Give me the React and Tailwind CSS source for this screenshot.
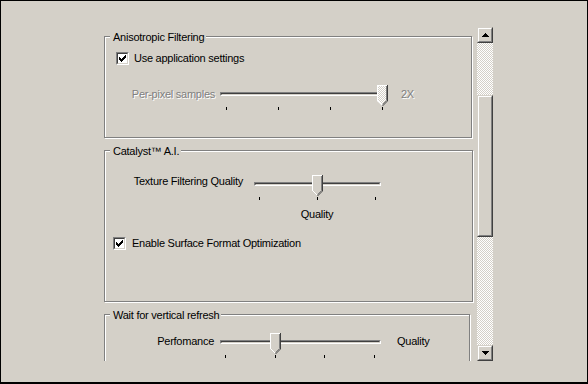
import React from 'react';

const raisedOuter = 'border border-t-[#d4d0c8] border-l-[#d4d0c8] border-r-[#404040] border-b-[#404040]';
const raisedInner = 'h-full border border-t-white border-l-white border-r-[#808080] border-b-[#808080] bg-[#d4d0c8]';
const sunkenOuter = 'border border-t-[#808080] border-l-[#808080] border-r-white border-b-white';
const sunkenInner = 'h-full border border-t-[#404040] border-l-[#404040] border-r-[#d4d0c8] border-b-[#d4d0c8]';
const checker = 'bg-[image:repeating-conic-gradient(#ffffff_0%_25%,#d4d0c8_0%_50%)] bg-[length:2px_2px]';
const disabledText = 'text-[#808080] [text-shadow:1px_1px_0_#ffffff]';

function CheckBox() {
  return (
    <div className={`w-[13px] h-[13px] shrink-0 ${sunkenOuter}`}>
      <div className="w-full h-full border border-t-[#404040] border-l-[#404040] border-r-[#d4d0c8] border-b-[#d4d0c8] bg-white p-[1px]">
        <svg width="7" height="7" viewBox="0 0 7 7" className="block" shapeRendering="crispEdges">
          <path
            fill="#000"
            d="M0 2h1v3H0zM1 3h1v3H1zM2 4h1v3H2zM3 3h1v3H3zM4 2h1v3H4zM5 1h1v3H5zM6 0h1v3H6z"
          />
        </svg>
      </div>
    </div>
  );
}

function Thumb({ disabled, className }) {
  return (
    <svg width="11" height="21" viewBox="0 0 11 21" className={`absolute top-0 ${className}`}>
      {disabled && (
        <defs>
          <pattern id="dither" width="2" height="2" patternUnits="userSpaceOnUse">
            <rect width="2" height="2" fill="#d4d0c8" />
            <rect width="1" height="1" fill="#ffffff" />
            <rect x="1" y="1" width="1" height="1" fill="#ffffff" />
          </pattern>
        </defs>
      )}
      <polygon points="0,0 11,0 11,16 5.5,21 0,16" fill={disabled ? 'url(#dither)' : '#d4d0c8'} />
      <path d="M0.5 16 V0.5 H10" stroke="#ffffff" fill="none" shapeRendering="crispEdges" />
      <path d="M0.5 15.5 L5.5 20.5" stroke="#ffffff" fill="none" />
      <path d="M9.5 1 V15.5 L5.5 19.5" stroke="#808080" fill="none" />
      <path d="M10.5 0 V16 L5.5 21" stroke="#404040" fill="none" />
    </svg>
  );
}

function Slider({ className, thumb, ticks, tickPad, disabled }) {
  return (
    <div className={`relative h-[25px] shrink-0 ${className}`}>
      <div className={`mt-[7px] h-[4px] ${sunkenOuter}`}>
        <div className={sunkenInner} />
      </div>
      <div className={`mt-[11px] flex justify-between ${tickPad}`}>
        {Array.from({ length: ticks }).map((_, i) => (
          <div key={i} className="w-[1px] h-[3px] bg-black" />
        ))}
      </div>
      <Thumb disabled={disabled} className={thumb} />
    </div>
  );
}

function GroupBox({ title, className, children }) {
  return (
    <div
      className={`relative shrink-0 border border-[#808080] shadow-[1px_1px_0_#ffffff,inset_1px_1px_0_#ffffff] ${className}`}
    >
      <span className="absolute left-[5px] top-[-6px] bg-[#d4d0c8] pl-[3px] pr-[2px] whitespace-nowrap">{title}</span>
      {children}
    </div>
  );
}

function ScrollButton({ down }) {
  return (
    <div className={`h-[16px] ${raisedOuter}`}>
      <div className={`${raisedInner} flex items-center justify-center`}>
        <svg width="7" height="4" viewBox="0 0 7 4" shapeRendering="crispEdges">
          <path
            fill="#000"
            d={down ? 'M0 0h7v1H6v1H5v1H4v1H3V3H2V2H1V1H0z' : 'M3 0h1v1h1v1h1v1h1v1H0V3h1V2h1V1h1z'}
          />
        </svg>
      </div>
    </div>
  );
}

export default function App() {
  return (
    <div className="w-[588px] h-[384px] overflow-hidden bg-[#d4d0c8] border-l border-t border-r border-b-2 border-black font-['Liberation_Sans',Arial,sans-serif] text-[11px] leading-[13px] tracking-[-0.25px] text-black">
      <div className="mt-[26px] flex h-[334px]">
        <div className="w-[476px] h-full overflow-hidden pt-[9px] pl-[103px] flex flex-col">
          <GroupBox title="Anisotropic Filtering" className="w-[368px] h-[102px]">
            <div className="mt-[15px] ml-[11px] flex items-center gap-[5px]">
              <CheckBox />
              <span>Use application settings</span>
            </div>
            <div className="mt-[20px] ml-[25px] flex items-start">
              <span className={`w-[85px] text-right mt-[3px] whitespace-nowrap ${disabledText}`}>Per-pixel samples</span>
              <Slider className="ml-[5px] w-[168px]" thumb="left-[157px]" ticks={4} tickPad="pl-[6px] pr-[5px]" disabled />
              <span className={`ml-[13px] mt-[3px] ${disabledText}`}>2X</span>
            </div>
          </GroupBox>

          <GroupBox title="Catalyst™ A.I." className="mt-[12px] w-[369px] h-[152px]">
            <div className="mt-[24px] ml-[20px] flex items-start">
              <span className="w-[118px] text-right whitespace-nowrap">Texture Filtering Quality</span>
              <Slider className="ml-[11px] w-[127px]" thumb="left-[58px]" ticks={3} tickPad="px-[5px]" />
            </div>
            <div className="mt-[8px] ml-[192px] w-[40px] text-center">Quality</div>
            <div className="mt-[16px] ml-[8px] flex items-center gap-[6px]">
              <CheckBox />
              <span className="whitespace-nowrap">Enable Surface Format Optimization</span>
            </div>
          </GroupBox>

          <GroupBox title="Wait for vertical refresh" className="mt-[12px] w-[366px] h-[90px]">
            <div className="mt-[18px] ml-[45px] flex items-start">
              <span className="w-[64px] text-right mt-[2px] whitespace-nowrap">Perfomance</span>
              <Slider className="ml-[6px] w-[161px]" thumb="left-[50px]" ticks={4} tickPad="pl-[5px] pr-[6px]" />
              <span className="ml-[16px] mt-[2px]">Quality</span>
            </div>
          </GroupBox>
        </div>

        <div className="w-[16px] h-full flex flex-col">
          <ScrollButton />
          <div className={`h-[52px] ${checker}`} />
          <div className={`h-[142px] ${raisedOuter}`}>
            <div className={raisedInner} />
          </div>
          <div className={`flex-1 ${checker}`} />
          <ScrollButton down />
        </div>
      </div>
    </div>
  );
}
